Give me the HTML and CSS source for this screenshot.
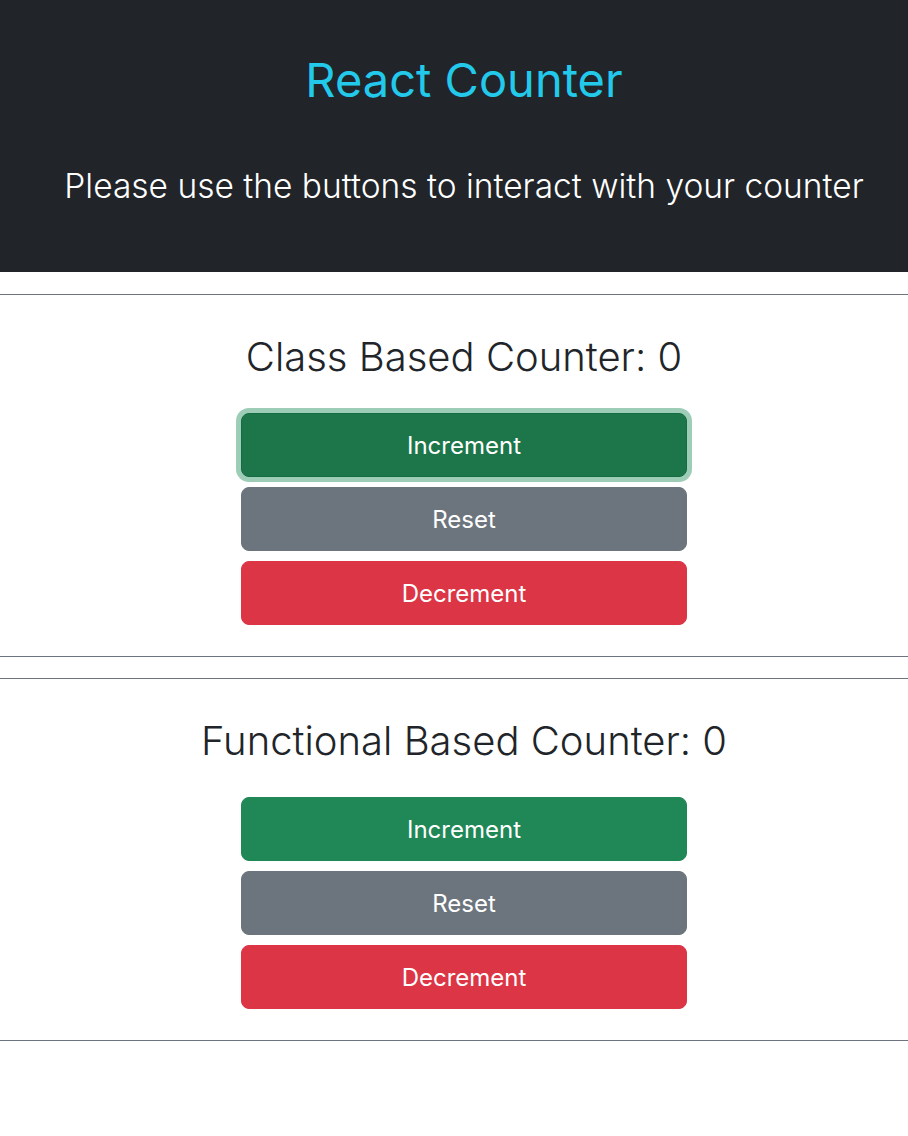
FILE: index.html
```html
<!DOCTYPE html>
<html lang="en">
<head>
<meta charset="utf-8">
<title>React Counter</title>
<link rel="stylesheet" href="styles.css">
</head>
<body>
<header class="app-header">
  <h1 class="app-title">React Counter</h1>
  <p class="app-lead">Please use the buttons to interact with your counter</p>
</header>
<main class="counters">
  <section class="counter">
    <hr class="rule">
    <div class="counter-body">
      <h2 class="counter-title">Class Based Counter: 0</h2>
      <div class="btn-stack">
        <button class="btn btn-success is-focused">Increment</button>
        <button class="btn btn-secondary">Reset</button>
        <button class="btn btn-danger">Decrement</button>
      </div>
    </div>
    <hr class="rule">
  </section>
  <section class="counter">
    <hr class="rule">
    <div class="counter-body">
      <h2 class="counter-title">Functional Based Counter: 0</h2>
      <div class="btn-stack">
        <button class="btn btn-success">Increment</button>
        <button class="btn btn-secondary">Reset</button>
        <button class="btn btn-danger">Decrement</button>
      </div>
    </div>
    <hr class="rule">
  </section>
</main>
</body>
</html>
```
FILE: styles.css
```css
* { box-sizing: border-box; }
html, body { margin: 0; padding: 0; }
body {
  font-family: Inter, "Noto Sans", "Liberation Sans", sans-serif;
  color: #212529;
  background: #fff;
}
.app-header {
  background: #212529;
  height: 272px;
  padding: 52px 0 0 20px;
  text-align: center;
}
.app-title {
  margin: 0;
  font-size: 47px;
  line-height: 1.2;
  font-weight: 400;
  color: #22c9eb;
}
.app-lead {
  margin: 58px 0 0;
  font-size: 33.5px;
  line-height: 1.2;
  font-weight: 300;
  color: #fff;
}
.counters {
  display: flex;
  flex-direction: column;
  gap: 21px;
  padding-top: 22px;
}
.counter {
  display: flex;
  flex-direction: column;
}
.rule {
  margin: 0;
  border: 0;
  border-top: 1px solid #6c757d;
}
.counter-body {
  padding-left: 20px;
  display: flex;
  flex-direction: column;
  align-items: center;
}
.counter-title {
  margin: 38px 0 0;
  font-size: 40px;
  line-height: 1.2;
  font-weight: 300;
  text-align: center;
}
.btn-stack {
  margin-top: 32px;
  margin-bottom: 31px;
  width: 446px;
  display: flex;
  flex-direction: column;
  gap: 10px;
}
.btn {
  height: 64px;
  width: 100%;
  border: 1px solid transparent;
  border-radius: 8px;
  font-family: inherit;
  font-size: 24px;
  font-weight: 400;
  color: #fff;
  cursor: pointer;
}
.btn-success { background: #208756; border-color: #208756; }
.btn-secondary { background: #6c757d; border-color: #6c757d; }
.btn-danger { background: #dc3545; border-color: #dc3545; }
.btn-success.is-focused {
  background: #1c7649;
  border-color: #146c43;
  box-shadow: 0 0 0 5px rgba(25, 135, 84, 0.42);
}
```
